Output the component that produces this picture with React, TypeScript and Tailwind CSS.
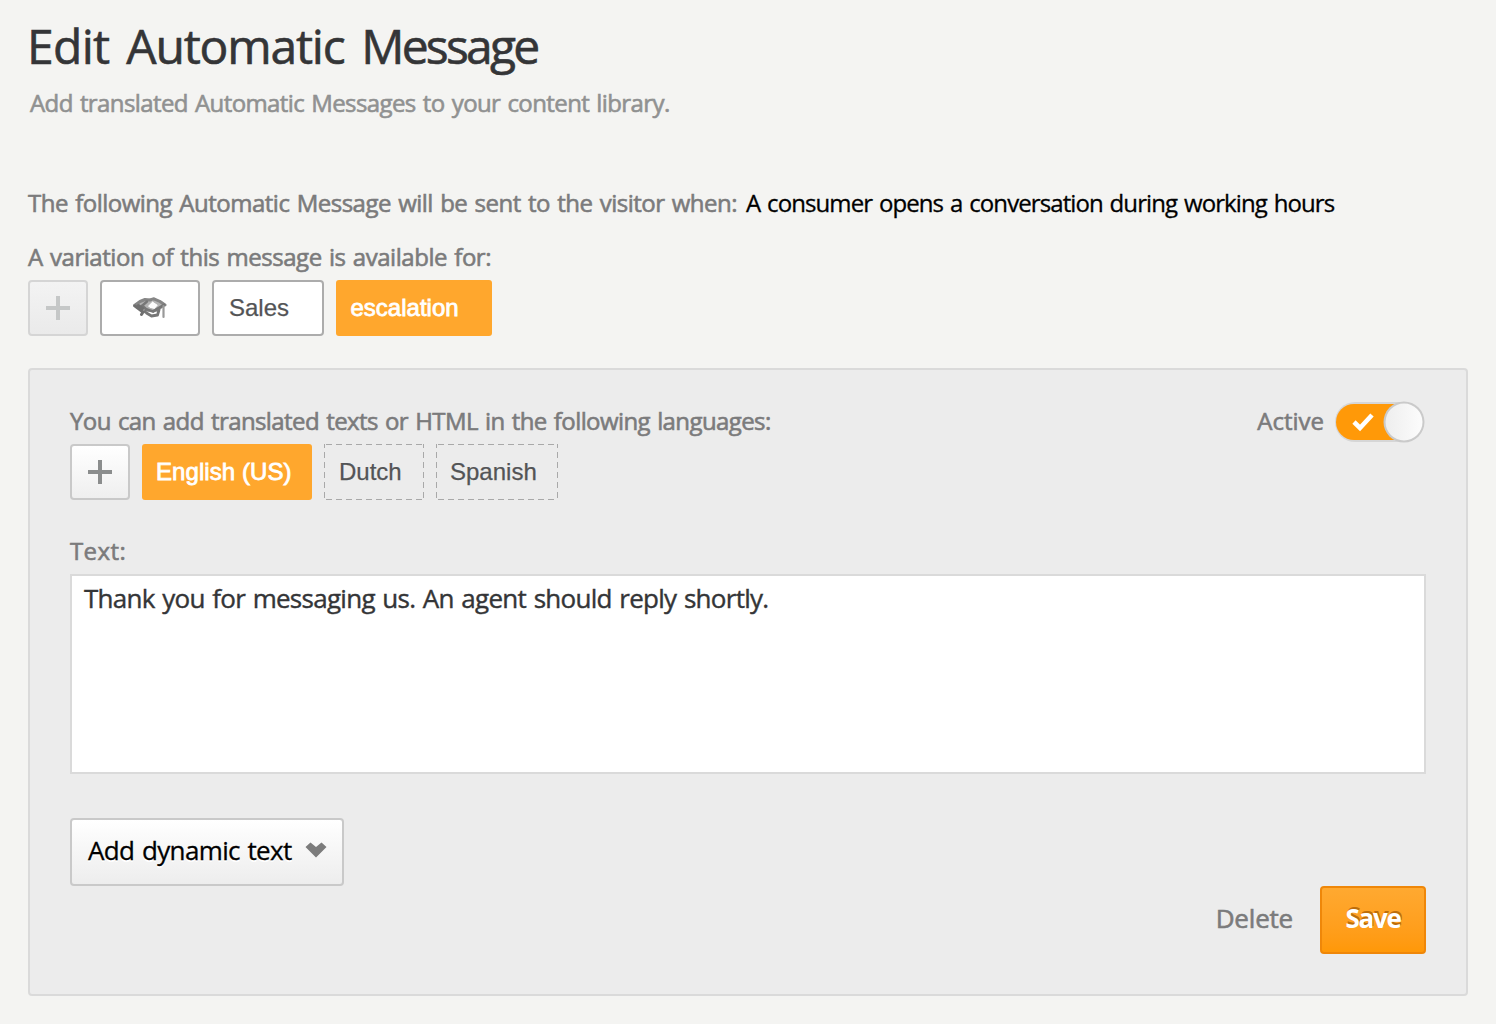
import React from "react";

const orange =
  "h-14 rounded-[3px] bg-[#ffa72d] text-white [-webkit-text-stroke:0.8px_white]";
const chip =
  "flex shrink-0 items-center font-['Liberation_Sans',Arial,sans-serif] text-2xl leading-8 whitespace-nowrap";
const stroked = "[-webkit-text-stroke:0.25px_#535456] text-[#535456]";
const dashed =
  "h-14 bg-no-repeat bg-[image:repeating-linear-gradient(90deg,transparent_0_2px,#a9a9a9_2px_8px,transparent_8px_10px),repeating-linear-gradient(90deg,transparent_0_2px,#a9a9a9_2px_8px,transparent_8px_10px),repeating-linear-gradient(0deg,transparent_0_2px,#a9a9a9_2px_8px,transparent_8px_10px),repeating-linear-gradient(0deg,transparent_0_2px,#a9a9a9_2px_8px,transparent_8px_10px)] bg-[position:0_0,0_100%,0_0,100%_0] bg-[size:100%_1px,100%_1px,1px_100%,1px_100%]";

function PlusButton({ muted = false }: { muted?: boolean }) {
  return (
    <button
      aria-label="Add"
      className={
        "flex h-14 w-[60px] shrink-0 items-center justify-center rounded-[4px] border-2 bg-linear-to-b " +
        (muted
          ? "border-[#d5d5d5] from-[#f3f3f3] to-[#eaeaea] text-[#c5c7c7]"
          : "border-[#c9c9c9] from-white to-[#efefef] text-[#8b8d8d]")
      }
    >
      <svg width="26" height="26" viewBox="0 0 26 26" fill="currentColor" className="blur-[0.5px]">
        <path d="M11 1h4v10h10v4H15v10h-4V15H1v-4h10z" />
      </svg>
    </button>
  );
}

function CapIcon() {
  return (
    <svg width="34" height="22" viewBox="0 0 34 22" fill="none" strokeLinecap="round" strokeLinejoin="round" className="blur-[0.6px]">
      <path d="M1 8 9 3 17 1.500 27 3 33 7.500 25 15 12 15Z" fill="#b4b4b4" />
      <path d="M1.500 8.500 7 4.500 12 2.500 17 3 21 1.800 27 4.500 32 8" stroke="#868686" strokeWidth="3" />
      <path d="M10 8 14 4.500M9 8.500l4 3.500-1 3" stroke="#777" strokeWidth="2.400" />
      <path d="M2 9 6 12 10 15 8.500 17.500M5.500 8.500l4 3" stroke="#6f6f6f" strokeWidth="3" />
      <path d="m14.500 9 5-5 6 4-4 4.500-4-1Z" fill="#fcfcfc" stroke="#b0b0b0" strokeWidth="1" />
      <path d="M14 12.500 20 14.500 26 11 31 8M13.500 16l5 3 6-1 1.500-5" stroke="#767676" strokeWidth="2.800" />
      <path d="M30.500 9v11" stroke="#999" strokeWidth="2.200" />
    </svg>
  );
}

function ActiveSwitch() {
  return (
    <svg role="switch" aria-checked="true" width="92" height="44" viewBox="0 0 92 44" className="blur-[0.5px]">
      <rect x="1" y="2" width="88" height="40" rx="20" fill="#cfcfcf" opacity=".75" />
      <rect x="2" y="4" width="76" height="36" rx="18" fill="#ff9908" />
      <circle cx="70" cy="22" r="20.500" fill="#cacaca" />
      <circle cx="70" cy="22" r="18.500" fill="url(#knob)" />
      <path d="m20 22 6 6 12-13" fill="none" stroke="#fff" strokeWidth="4.600" />
      <defs>
        <linearGradient id="knob" x1="0" y1="0" x2="1" y2="0">
          <stop offset="0" stopColor="#eeeeee" />
          <stop offset="1" stopColor="#fcfcfc" />
        </linearGradient>
      </defs>
    </svg>
  );
}

export default function App() {
  return (
    <main className="h-[1024px] w-[1496px] overflow-hidden bg-[#f4f4f2] px-7 pt-[14px] font-['Open_Sans','Trebuchet_MS',sans-serif] text-2xl leading-8 whitespace-nowrap text-[#7b7b7c] [-webkit-text-stroke:0.6px_currentColor] [word-spacing:1.5px]">
      <h1 className="-ml-px text-[48px] leading-[64px] font-normal tracking-[-0.7px] text-[#343537] [word-spacing:5px]">
        Edit <span className="tracking-[-1.2px]">Automatic</span>{" "}
        <span className="tracking-[-2.8px]">Message</span>
      </h1>
      <p className="mt-[9px] ml-0.5 tracking-[-0.6px] text-[#909191]">
        Add translated Automatic Messages to your content library.
      </p>

      <p className="mt-[68px] flex">
        <span className="w-[718px] tracking-[-0.5px]">
          The following Automatic Message will be sent to the visitor when:
        </span>
        <span className="tracking-[-0.91px] text-black [-webkit-text-stroke:0.3px_black]">
          A consumer opens a conversation during working hours
        </span>
      </p>

      <p className="mt-[22px] tracking-[-0.46px]">A variation of this message is available for:</p>
      <div className="mt-[7px] flex gap-3 [word-spacing:0px]">
        <PlusButton muted />
        <button className="flex h-14 w-[100px] items-center justify-center rounded-[4px] border-2 border-[#acacac] bg-white">
          <CapIcon />
        </button>
        <button className={`${chip} ${stroked} h-14 w-28 rounded-[4px] border-2 border-[#acacac] bg-white pl-[15px]`}>
          Sales
        </button>
        <button className={`${chip} ${orange} w-[156px] pl-[14.5px]`}>escalation</button>
      </div>

      <section className="mt-8 h-[628px] w-[1440px] rounded-[4px] border-2 border-[#dadada] bg-[#ececec] px-10 pt-[30px]">
        <div className="flex h-11 items-center justify-between">
          <p className="pb-0.5 tracking-[-0.59px]">
            You can add translated texts or HTML in the following languages:
          </p>
          <div className="flex items-center gap-2.5">
            <span className="pb-0.5 tracking-[0px]">Active</span>
            <ActiveSwitch />
          </div>
        </div>
        <div className="flex gap-3 [word-spacing:0px]">
          <PlusButton />
          <button className={`${chip} ${orange} w-[170px] pl-[14px] tracking-[0.08px]`}>English (US)</button>
          <button className={`${chip} ${stroked} ${dashed} w-[100px] pl-[15px]`}>
            Dutch
          </button>
          <button className={`${chip} ${stroked} ${dashed} w-[122px] pl-[14px]`}>
            Spanish
          </button>
        </div>

        <label className="mt-[35px] block tracking-[0.4px]" htmlFor="message">
          Text:
        </label>
        <textarea
          id="message"
          className="mt-[7px] block h-[200px] w-[1356px] resize-none border-2 border-[#dadada] bg-white px-3 py-1.5 text-[26px] leading-8 font-normal tracking-[-0.72px] text-[#343537] [-webkit-text-stroke:0.4px_#343537] [word-spacing:1.5px]"
          defaultValue="Thank you for messaging us. An agent should reply shortly."
        />

        <button className="mt-11 flex h-[68px] w-[274px] items-center rounded-[4px] border-2 border-[#c9c9c9] bg-linear-to-b from-white to-[#ededed] pl-4 pb-1 text-[26px] font-normal text-black [text-shadow:0_2px_0_white] [word-spacing:1.5px] [-webkit-text-stroke:0.3px_black]">
          <span className="w-[217px] text-left tracking-[-0.64px]">Add dynamic text</span>
          <svg width="22" height="18" viewBox="0 0 22 18" className="blur-[0.6px]">
            <path d="M.5 6 5.500 1.500 11 6 16.500 1.500 21.500 6 11 16.500Z" fill="#7c7c7c" />
          </svg>
        </button>

        <div className="flex items-center justify-end gap-[27px] text-[26px]">
          <button className="pb-1 tracking-[-0.2px]">Delete</button>
          <button className="h-[68px] w-[106px] rounded-[4px] border-2 border-[#ef8709] bg-linear-to-b from-[#ffa930] to-[#ff9807] pb-1 font-bold tracking-[-1.3px] text-white [-webkit-text-stroke:0px] [text-shadow:1px_-2px_0_#bd6d0b]">
            Save
          </button>
        </div>
      </section>
    </main>
  );
}
